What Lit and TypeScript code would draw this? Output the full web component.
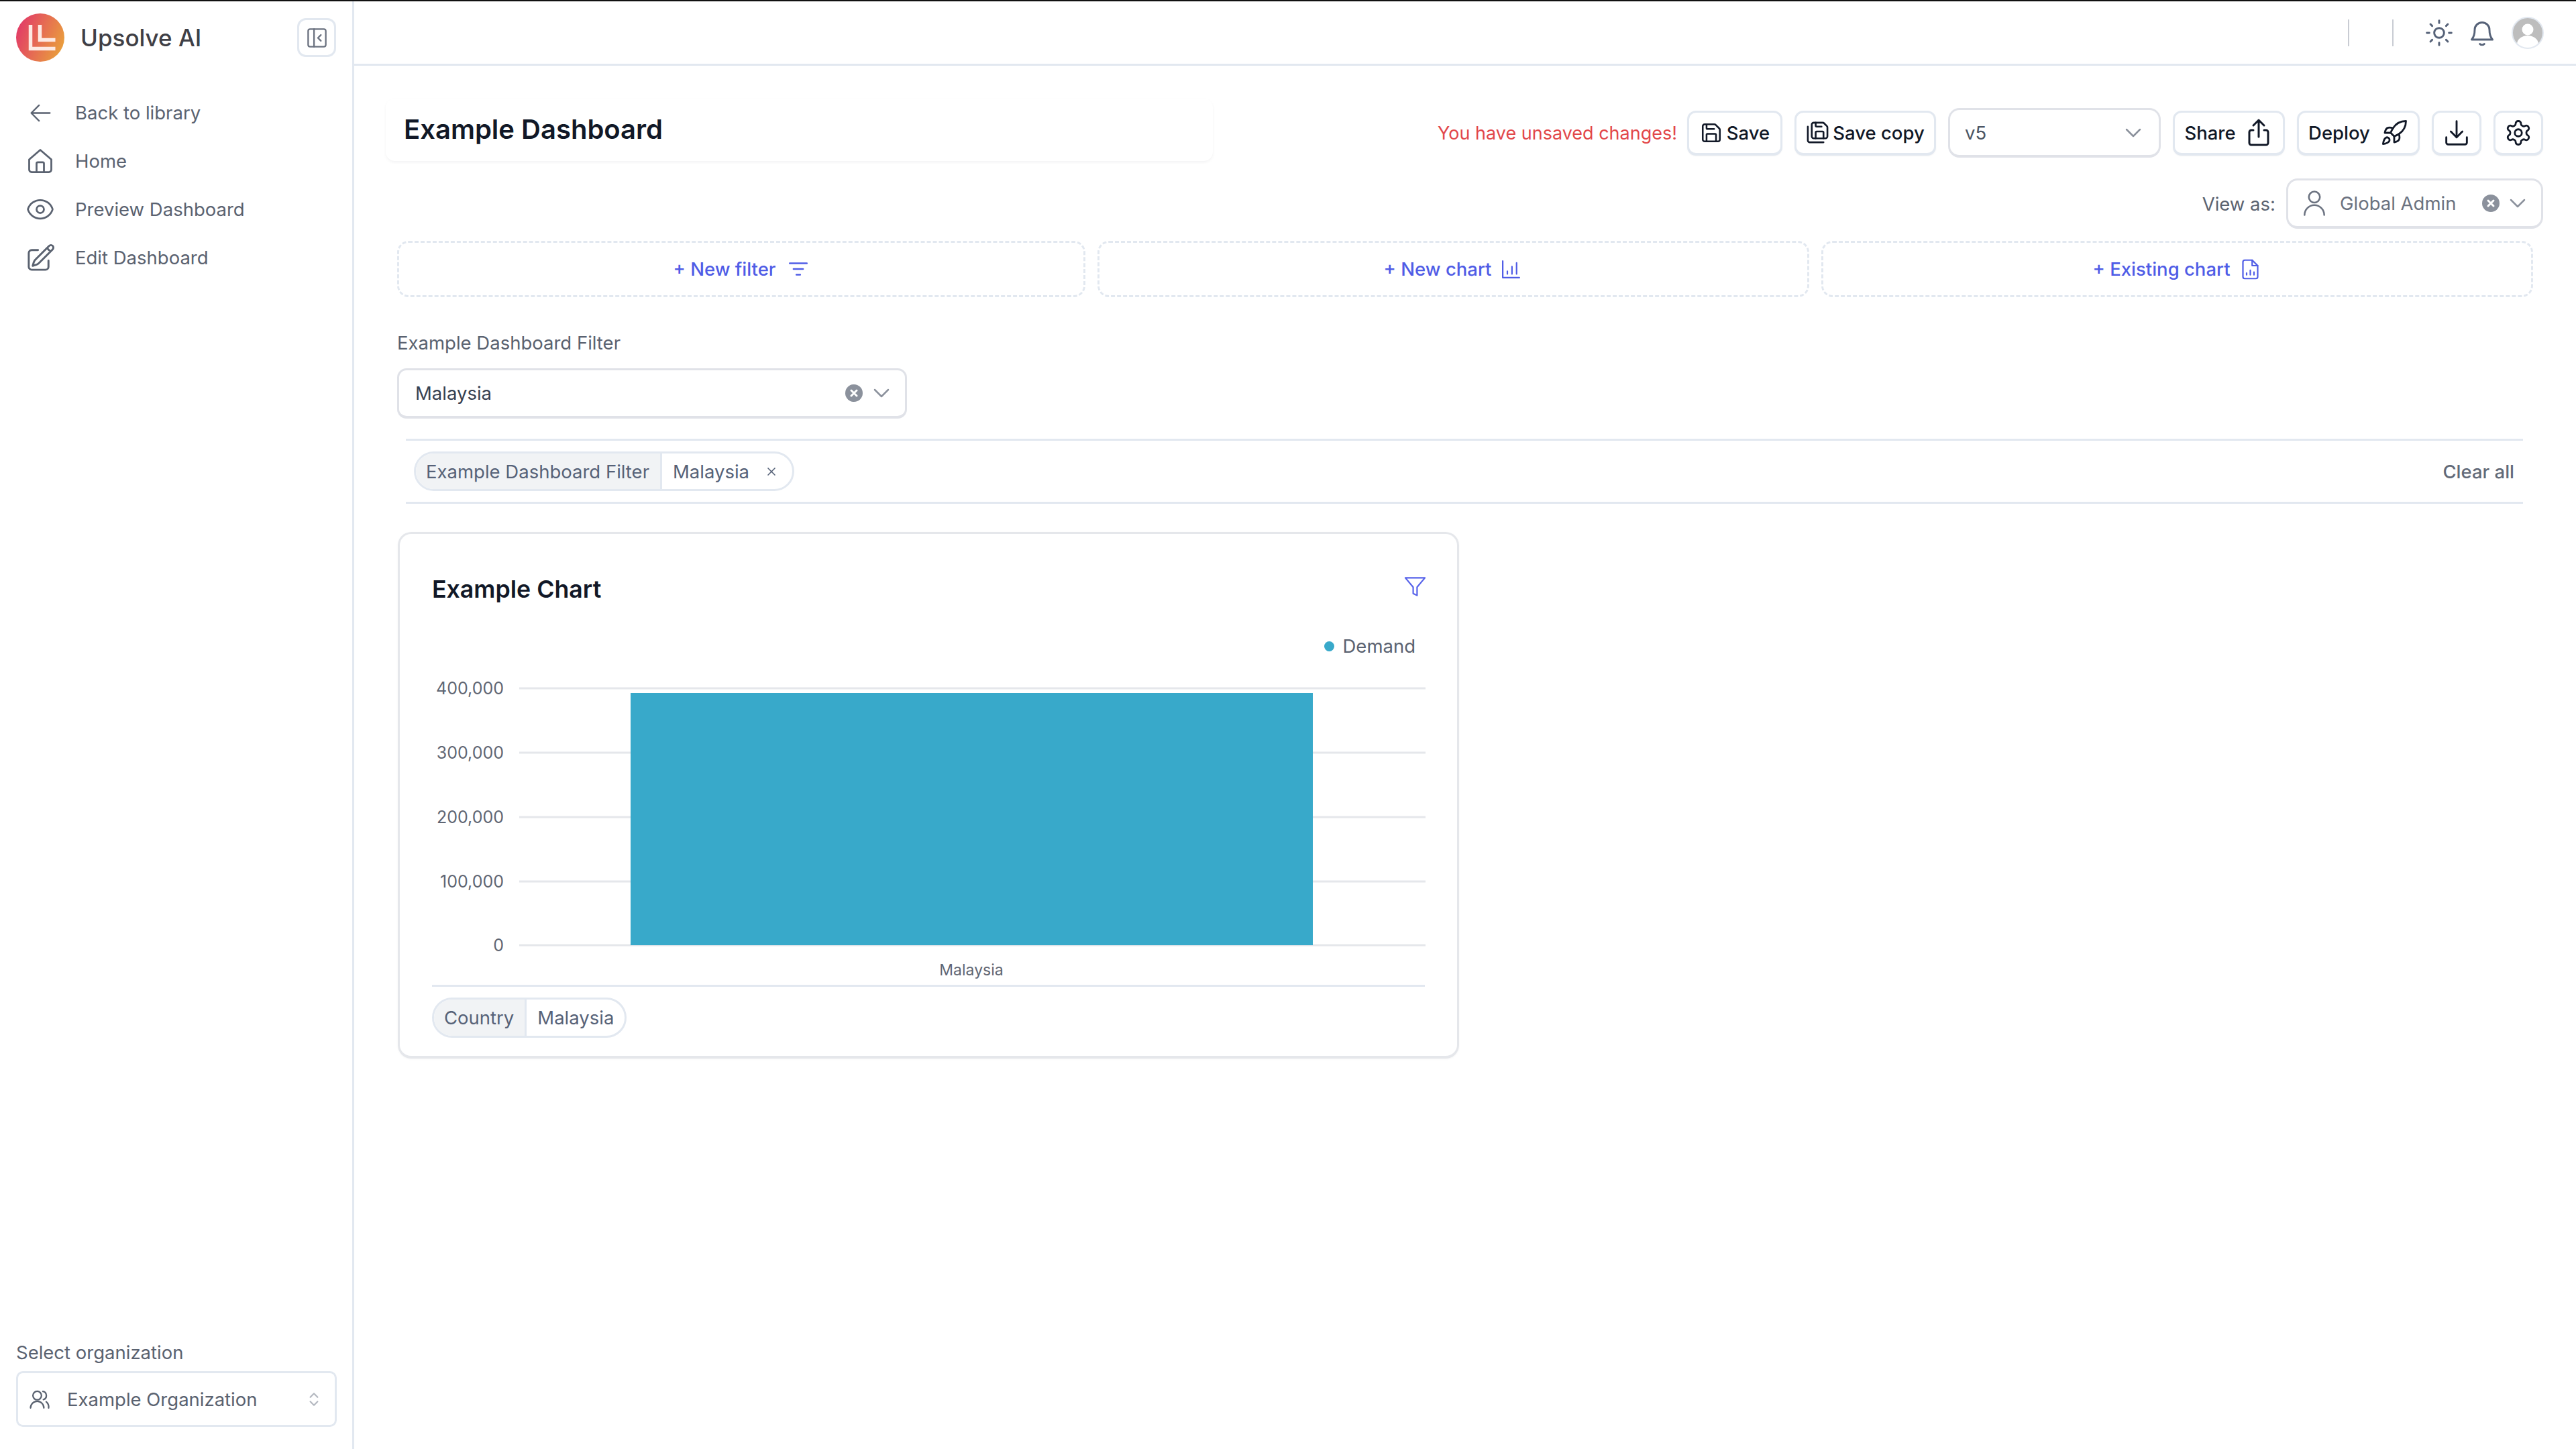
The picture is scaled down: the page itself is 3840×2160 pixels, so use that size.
import { LitElement, html, css, svg } from "lit";
import { customElement } from "lit/decorators.js";

const ic = (content: unknown, size: number, sw = 1.5) => html`<svg class="i" width=${size} height=${size} viewBox="0 0 24 24" stroke-width=${sw}>${content}</svg>`;

const P = {
  back: svg`<path d="M10.5 19.5 3 12m0 0 7.5-7.5M3 12h18"/>`,
  home: svg`<path d="M3 10.8 12 3l9 7.8V19a2 2 0 0 1-2 2H5a2 2 0 0 1-2-2z"/><path d="M9 21v-7a1 1 0 0 1 1-1h4a1 1 0 0 1 1 1v7"/>`,
  eye: svg`<path d="M2.036 12.322a1.012 1.012 0 0 1 0-.639C3.423 7.51 7.36 4.5 12 4.5c4.638 0 8.573 3.007 9.963 7.178.07.207.07.431 0 .639C20.577 16.49 16.64 19.5 12 19.5c-4.638 0-8.573-3.007-9.963-7.178Z"/><path d="M15 12a3 3 0 1 1-6 0 3 3 0 0 1 6 0Z"/>`,
  edit: svg`<path d="m16.862 4.487 1.687-1.688a1.875 1.875 0 1 1 2.652 2.652L10.582 16.07a4.5 4.5 0 0 1-1.897 1.13L6 18l.8-2.685a4.5 4.5 0 0 1 1.13-1.897l8.932-8.931Zm0 0L19.5 7.125M18 14v4.75A2.25 2.25 0 0 1 15.75 21H5.25A2.25 2.25 0 0 1 3 18.75V8.25A2.25 2.25 0 0 1 5.25 6H10"/>`,
  panel: svg`<rect x="3" y="3" width="18" height="18" rx="2"/><path d="M9 3v18M16 9l-3 3 3 3"/>`,
  sun: svg`<circle cx="12" cy="12" r="4"/><path d="M12 2v2M12 20v2M4.93 4.93l1.41 1.41M17.66 17.66l1.41 1.41M2 12h2M20 12h2M6.34 17.66l-1.41 1.41M19.07 4.93l-1.41 1.41"/>`,
  bell: svg`<path d="M6 9.5a6 6 0 0 1 12 0c0 4 .8 6 2.5 8h-17C5.2 15.500 6 13.500 6 9.500z"/><path d="M10.200 21a2.500 2.500 0 0 0 3.600 0"/>`,
  save: svg`<path d="M15.200 3a2 2 0 0 1 1.400.6l3.800 3.800a2 2 0 0 1 .6 1.400V19a2 2 0 0 1-2 2H5a2 2 0 0 1-2-2V5a2 2 0 0 1 2-2z"/><path d="M17 21v-7a1 1 0 0 0-1-1H8a1 1 0 0 0-1 1v7"/><path d="M7 3v4a1 1 0 0 0 1 1h7"/>`,
  saveAll: svg`<path d="M10 2v3a1 1 0 0 0 1 1h5"/><path d="M18 18v-6a1 1 0 0 0-1-1h-6a1 1 0 0 0-1 1v6"/><path d="M18 22H4a2 2 0 0 1-2-2V6"/><path d="M8 18a2 2 0 0 1-2-2V4a2 2 0 0 1 2-2h9.172a2 2 0 0 1 1.414.586l2.828 2.828A2 2 0 0 1 22 6.828V16a2 2 0 0 1-2 2z"/>`,
  share: svg`<path d="M8 10H6.500A1.500 1.500 0 0 0 5 11.500v8A1.500 1.500 0 0 0 6.500 21h11a1.500 1.500 0 0 0 1.500-1.500v-8a1.500 1.500 0 0 0-1.500-1.500H16"/><path d="M12 15V2.500M8 6.500l4-4 4 4"/>`,
  rocket: svg`<path d="M4.500 16.500c-1.500 1.260-2 5-2 5s3.740-.5 5-2c.71-.84.7-2.130-.09-2.910a2.180 2.180 0 0 0-2.910-.09z"/><path d="m12 15-3-3a22 22 0 0 1 2-3.950A12.880 12.880 0 0 1 22 2c0 2.720-.78 7.500-6 11a22.350 22.350 0 0 1-4 2z"/><path d="M9 12H4s.55-3.030 2-4c1.620-1.080 5 0 5 0"/><path d="M12 15v5s3.030-.55 4-2c1.080-1.620 0-5 0-5"/>`,
  download: svg`<path d="M12 3v12.500M7.500 11l4.500 4.500 4.500-4.500"/><path d="M4 15.500v4A1.500 1.500 0 0 0 5.500 21h13a1.500 1.500 0 0 0 1.500-1.500v-4"/>`,
  gear: svg`<path d="M12.220 2h-.44a2 2 0 0 0-2 2v.18a2 2 0 0 1-1 1.730l-.43.25a2 2 0 0 1-2 0l-.15-.08a2 2 0 0 0-2.730.73l-.22.38a2 2 0 0 0 .73 2.730l.15.1a2 2 0 0 1 1 1.720v.51a2 2 0 0 1-1 1.740l-.15.09a2 2 0 0 0-.73 2.730l.22.38a2 2 0 0 0 2.730.73l.15-.08a2 2 0 0 1 2 0l.43.25a2 2 0 0 1 1 1.730V20a2 2 0 0 0 2 2h.44a2 2 0 0 0 2-2v-.18a2 2 0 0 1 1-1.730l.43-.25a2 2 0 0 1 2 0l.15.08a2 2 0 0 0 2.730-.73l.22-.39a2 2 0 0 0-.73-2.730l-.15-.08a2 2 0 0 1-1-1.740v-.5a2 2 0 0 1 1-1.740l.15-.09a2 2 0 0 0 .73-2.730l-.22-.38a2 2 0 0 0-2.730-.73l-.15.08a2 2 0 0 1-2 0l-.43-.25a2 2 0 0 1-1-1.730V4a2 2 0 0 0-2-2z"/><circle cx="12" cy="12" r="3"/>`,
  user: svg`<circle cx="12" cy="7" r="4.500"/><path d="M4 21.500a8 8 0 0 1 16 0"/>`,
  users: svg`<circle cx="9.500" cy="8" r="4.500"/><path d="M2.500 21a7 7 0 0 1 14 0"/><path d="M15.500 3.600a4.500 4.500 0 0 1 .5 8.700"/><path d="M19 14.500a7 7 0 0 1 2.500 6.500"/>`,
  funnel: svg`<path d="M22 3H2l8 9.460V19l4 2v-8.540L22 3z"/>`,
  listFilter: svg`<path d="M3 6h18M7 12h10M10 18h4"/>`,
  bars: svg`<path d="M3 3v18h18M8 17v-3M13 17V9M18 17V5"/>`,
  doc: svg`<path d="M14 2H6a2 2 0 0 0-2 2v16a2 2 0 0 0 2 2h12a2 2 0 0 0 2-2V8z"/><path d="M14 2v6h6M8 18v-2M12 18v-5M16 18v-3"/>`,
  chev: svg`<path d="m6 9 6 6 6-6"/>`,
  updown: svg`<path d="m7 9 5-5 5 5M7 15l5 5 5-5"/>`,
  x: svg`<path d="M6 6l12 12M18 6 6 18"/>`,
};

const clearDot = html`<span class="clear"><svg class="i" width="16" height="16" viewBox="0 0 24 24" stroke-width="4.500">${P.x}</svg></span>`;

@customElement("app-root")
export class AppRoot extends LitElement {
  static styles = css`
    :host { display: block; width: 100vw; height: 100vh; font-family: "Inter", "Liberation Sans", sans-serif; font-size: 27.500px; color: #5a6270; background: #fff; }
    * { box-sizing: border-box; }
    .i { fill: none; stroke: currentColor; stroke-linecap: round; stroke-linejoin: round; flex: none; display: block; }
    .root { display: flex; height: 100%; border-top: 2px solid #111; }

    .side { width: 528px; flex: none; border-right: 3px solid #e2e8f0; display: flex; flex-direction: column; padding: 18px 24px 33px; }
    .brand { display: flex; align-items: center; height: 72px; }
    .logo { width: 72px; height: 72px; flex: none; display: block; }
    .brand-name { font-size: 35px; font-weight: 500; color: #3f3f46; margin-left: 24px; }
    .collapse { margin-left: auto; width: 58px; height: 58px; border: 3px solid #e2e8f0; border-radius: 13px; display: flex; align-items: center; justify-content: center; color: #6b7280; }
    .nav { display: flex; flex-direction: column; margin-top: 40px; }
    .nav-item { height: 72px; display: flex; align-items: center; color: #5a6270; }
    .nav-icon { width: 48px; height: 48px; margin-left: 12px; margin-right: 28px; flex: none; display: flex; align-items: center; justify-content: center; }
    .foot { margin-top: auto; }
    .foot-label { line-height: 34px; margin-bottom: 11px; }
    .org { height: 83px; width: 478px; border: 3px solid #e2e8f0; border-radius: 10px; display: flex; align-items: center; padding: 0 18px 0 15px; }
    .org .txt { margin-left: 24px; flex: 1; }
    .org .ud { color: #b4b8c0; }

    .main { flex: 1; min-width: 0; display: flex; flex-direction: column; }
    .top { height: 96px; flex: none; border-bottom: 3px solid #e2e8f0; display: flex; align-items: center; justify-content: flex-end; padding-right: 48px; color: #566278; }
    .sep { width: 2px; height: 40px; background: #c9ccd3; }
    .sep + .sep { margin-left: 64px; }
    .sun { margin-left: 46px; }
    .bell { margin-left: 20px; }
    .avatar { margin-left: 22px; width: 48px; height: 48px; display: block; }

    .content { padding: 49px 49px 0 47px; display: flex; flex-direction: column; }
    .titlebar { display: flex; align-items: flex-start; }
    .title-box { width: 1233px; height: 93px; border-radius: 14px; box-shadow: 0 2px 4px rgba(17,24,39,.05); display: flex; align-items: center; padding-left: 27px; padding-bottom: 2px; font-size: 40px; font-weight: 600; color: #111827; }
    .actions { margin-left: auto; margin-top: 14px; display: flex; align-items: center; gap: 18px; height: 74px; }
    .warn { color: #e2474a; font-size: 27px; margin-right: -3px; }
    .btn { height: 67px; border: 3px solid #e2e8f0; border-bottom-width: 4px; border-radius: 13px; display: flex; align-items: center; justify-content: center; color: #111827; font-weight: 500; background: #fff; box-shadow: 0 1px 2px rgba(0,0,0,.04); }
    .b-save { width: 142px; gap: 6px; }
    .b-copy { width: 211px; gap: 5px; }
    .b-share { width: 167px; gap: 10px; padding-left: 2px; }
    .b-deploy { width: 183px; gap: 15px; }
    .b-sq { width: 74px; }
    .ver { width: 317px; height: 74px; border: 3px solid #e0e2e8; border-bottom-width: 4px; border-radius: 17px; display: flex; align-items: center; padding: 0 18px 0 22px; color: #4b5563; justify-content: space-between; }
    .chev { color: #8b919c; }

    .view-row { display: flex; justify-content: flex-end; align-items: center; margin-top: 26px; gap: 16px; }
    .view-sel { width: 383px; height: 75px; border: 3px solid #e0e2e8; border-bottom-width: 4px; border-radius: 17px; display: flex; align-items: center; padding: 0 15px 0 17px; color: #6b7280; }
    .view-sel .name { margin-left: 16px; flex: 1; }
    .view-sel .chev { margin-left: 7px; }
    .clear { width: 26px; height: 26px; border-radius: 50%; background: #8b919c; color: #fff; display: flex; align-items: center; justify-content: center; flex: none; }

    .adds { display: grid; grid-template-columns: 1025fr 1060fr 1060fr; gap: 18px; margin: 18px 15px 0 17px; }
    .add { height: 84px; border: 3px dashed #e2e8f0; border-radius: 17px; display: flex; align-items: center; justify-content: center; gap: 17px; color: #4f5ce6; font-weight: 500; padding-left: 1px; }
    .add.narrow { gap: 13px; padding-left: 0; padding-right: 1px; }

    .filter { margin: 51px 0 0 17px; }
    .filter-label { line-height: 34px; }
    .filter-sel { margin-top: 21px; width: 760px; height: 75px; border: 3px solid #e0e2e8; border-bottom-width: 4px; border-radius: 14px; display: flex; align-items: center; padding: 0 15px 0 24px; color: #374151; }
    .filter-sel .name { flex: 1; }
    .filter-sel .chev { margin-left: 8px; }

    .bar { margin: 30px 30px 0 30px; height: 97px; border-top: 3px solid #e2e8f0; border-bottom: 3px solid #e2e8f0; display: flex; align-items: center; padding: 0 13px 0 12px; justify-content: space-between; }
    .chips { display: inline-flex; border: 3px solid #e2e8f0; border-radius: 32px; overflow: hidden; color: #566278; height: 59px; align-items: stretch; }
    .chip { display: flex; align-items: center; padding: 0 16px; }
    .chip.k { background: #f1f3f5; border-right: 3px solid #e2e8f0; padding-left: 15px; }
    .chip.v { padding-left: 16px; }
    .chip .x { margin-left: 23px; margin-right: 5px; }
    .clear-all { color: #626a78; font-weight: 500; }

    .card { margin: 42px 0 0 18px; width: 1582px; height: 785px; border: 3px solid #e5e7eb; border-bottom-width: 4px; border-radius: 20px; padding: 0 48px; box-shadow: 0 1px 3px rgba(0,0,0,.04); display: flex; flex-direction: column; }
    .card-head { display: flex; justify-content: space-between; align-items: flex-start; padding-top: 61px; height: 122px; }
    .card-title { font-size: 35.700px; font-weight: 600; color: #111827; line-height: 42px; }
    .card-funnel { color: #5763ea; margin-right: -3px; }
    .legend { display: flex; align-items: center; justify-content: flex-end; gap: 13px; padding-right: 14px; height: 34px; color: #5a6270; margin-top: 28px; }
    .dot { width: 15px; height: 15px; border-radius: 50%; background: #38a9ca; }
    .chart { display: block; margin: 26px -2px 0 0; }
    .axis { font-family: "Inter", "Liberation Sans", sans-serif; font-size: 25px; fill: #5f6673; }
    .xlab { font-family: "Inter", "Liberation Sans", sans-serif; font-size: 23px; fill: #5f6673; }
    .card-foot { border-top: 3px solid #e2e8f0; padding-top: 16px; }
    .card-foot .chips { height: 60px; }
  `;

  render() {
    const grid = [
      [0, "400,000"],
      [96, "300,000"],
      [192, "200,000"],
      [288, "100,000"],
      [383, "0"],
    ] as const;
    const nav: [string, unknown, number][] = [
      ["Back to library", P.back, 37],
      ["Home", P.home, 44],
      ["Preview Dashboard", P.eye, 44],
      ["Edit Dashboard", P.edit, 47],
    ];
    return html`
      <div class="root">
        <aside class="side">
          <div class="brand">
            <svg class="logo" viewBox="0 0 72 72">
              <defs><linearGradient id="lg" x1="0" y1="0.3" x2="1" y2="0.7"><stop offset="0" stop-color="#e23a68"/><stop offset="0.95" stop-color="#e99c3e"/></linearGradient></defs>
              <circle cx="36" cy="36" r="36" fill="url(#lg)"/>
              <path d="M21.500 17v35.500H58.500M35.500 17v22.500H58.500" fill="none" stroke="#fde9e3" stroke-width="5.500"/>
            </svg>
            <span class="brand-name">Upsolve AI</span>
            <span class="collapse">${ic(P.panel, 35, 1.6)}</span>
          </div>
          <nav class="nav">
            ${nav.map(([t, p, s]) => html`<div class="nav-item"><span class="nav-icon">${ic(p, s, 1.5)}</span>${t}</div>`)}
          </nav>
          <div class="foot">
            <div class="foot-label">Select organization</div>
            <div class="org">${ic(P.users, 34, 1.6)}<span class="txt">Example Organization</span><span class="ud">${ic(P.updown, 26, 2)}</span></div>
          </div>
        </aside>
        <div class="main">
          <header class="top">
            <span class="sep"></span><span class="sep"></span>
            <span class="sun">${ic(P.sun, 44, 1.6)}</span>
            <span class="bell">${ic(P.bell, 44, 1.6)}</span>
            <svg class="avatar" viewBox="0 0 48 48">
              <defs><clipPath id="av"><circle cx="24" cy="24" r="23"/></clipPath></defs>
              <circle cx="24" cy="24" r="23" fill="#bdbdbd"/>
              <g clip-path="url(#av)" fill="#fff"><circle cx="24" cy="19" r="8.500"/><ellipse cx="24" cy="41" rx="16" ry="13"/></g>
              <circle cx="24" cy="24" r="23" fill="none" stroke="#e2e8f0" stroke-width="2"/>
            </svg>
          </header>
          <div class="content">
            <div class="titlebar">
              <div class="title-box">Example Dashboard</div>
              <div class="actions">
                <span class="warn">You have unsaved changes!</span>
                <div class="btn b-save">${ic(P.save, 34, 1.8)}Save</div>
                <div class="btn b-copy">${ic(P.saveAll, 35, 1.8)}Save copy</div>
                <div class="ver">v5<span class="chev">${ic(P.chev, 40, 1.5)}</span></div>
                <div class="btn b-share">Share${ic(P.share, 48, 1.5)}</div>
                <div class="btn b-deploy">Deploy${ic(P.rocket, 42, 1.6)}</div>
                <div class="btn b-sq">${ic(P.download, 46, 1.5)}</div>
                <div class="btn b-sq">${ic(P.gear, 42, 1.6)}</div>
              </div>
            </div>
            <div class="view-row">
              <span>View as:</span>
              <div class="view-sel">${ic(P.user, 44, 1.4)}<span class="name">Global Admin</span>${clearDot}<span class="chev">${ic(P.chev, 40, 1.5)}</span></div>
            </div>
            <div class="adds">
              <div class="add">+ New filter${ic(P.listFilter, 34, 1.8)}</div>
              <div class="add narrow">+ New chart${ic(P.bars, 33, 1.6)}</div>
              <div class="add narrow">+ Existing chart${ic(P.doc, 33, 1.6)}</div>
            </div>
            <div class="filter">
              <div class="filter-label">Example Dashboard Filter</div>
              <div class="filter-sel"><span class="name">Malaysia</span>${clearDot}<span class="chev">${ic(P.chev, 40, 1.5)}</span></div>
            </div>
            <div class="bar">
              <div class="chips"><span class="chip k">Example Dashboard Filter</span><span class="chip v">Malaysia<span class="x">${ic(P.x, 20, 2)}</span></span></div>
              <span class="clear-all">Clear all</span>
            </div>
            <section class="card">
              <div class="card-head">
                <span class="card-title">Example Chart</span>
                <span class="card-funnel">${ic(P.funnel, 35, 1.5)}</span>
              </div>
              <div class="legend"><span class="dot"></span>Demand</div>
              <svg class="chart" width="1482" height="462" viewBox="0 0 1482 462">
                ${grid.map(([y, t]) => svg`<line x1="130" x2="1481" y1=${y + 20} y2=${y + 20} stroke="#e5e7eb" stroke-width="3"/><text class="axis" x="107" y=${y + 29} text-anchor="end">${t}</text>`)}
                <rect x="296" y="27" width="1017" height="376" fill="#38a9ca"/>
                <text class="xlab" x="804" y="448" text-anchor="middle">Malaysia</text>
              </svg>
              <div class="card-foot">
                <div class="chips"><span class="chip k">Country</span><span class="chip">Malaysia</span></div>
              </div>
            </section>
          </div>
        </div>
      </div>
    `;
  }
}
